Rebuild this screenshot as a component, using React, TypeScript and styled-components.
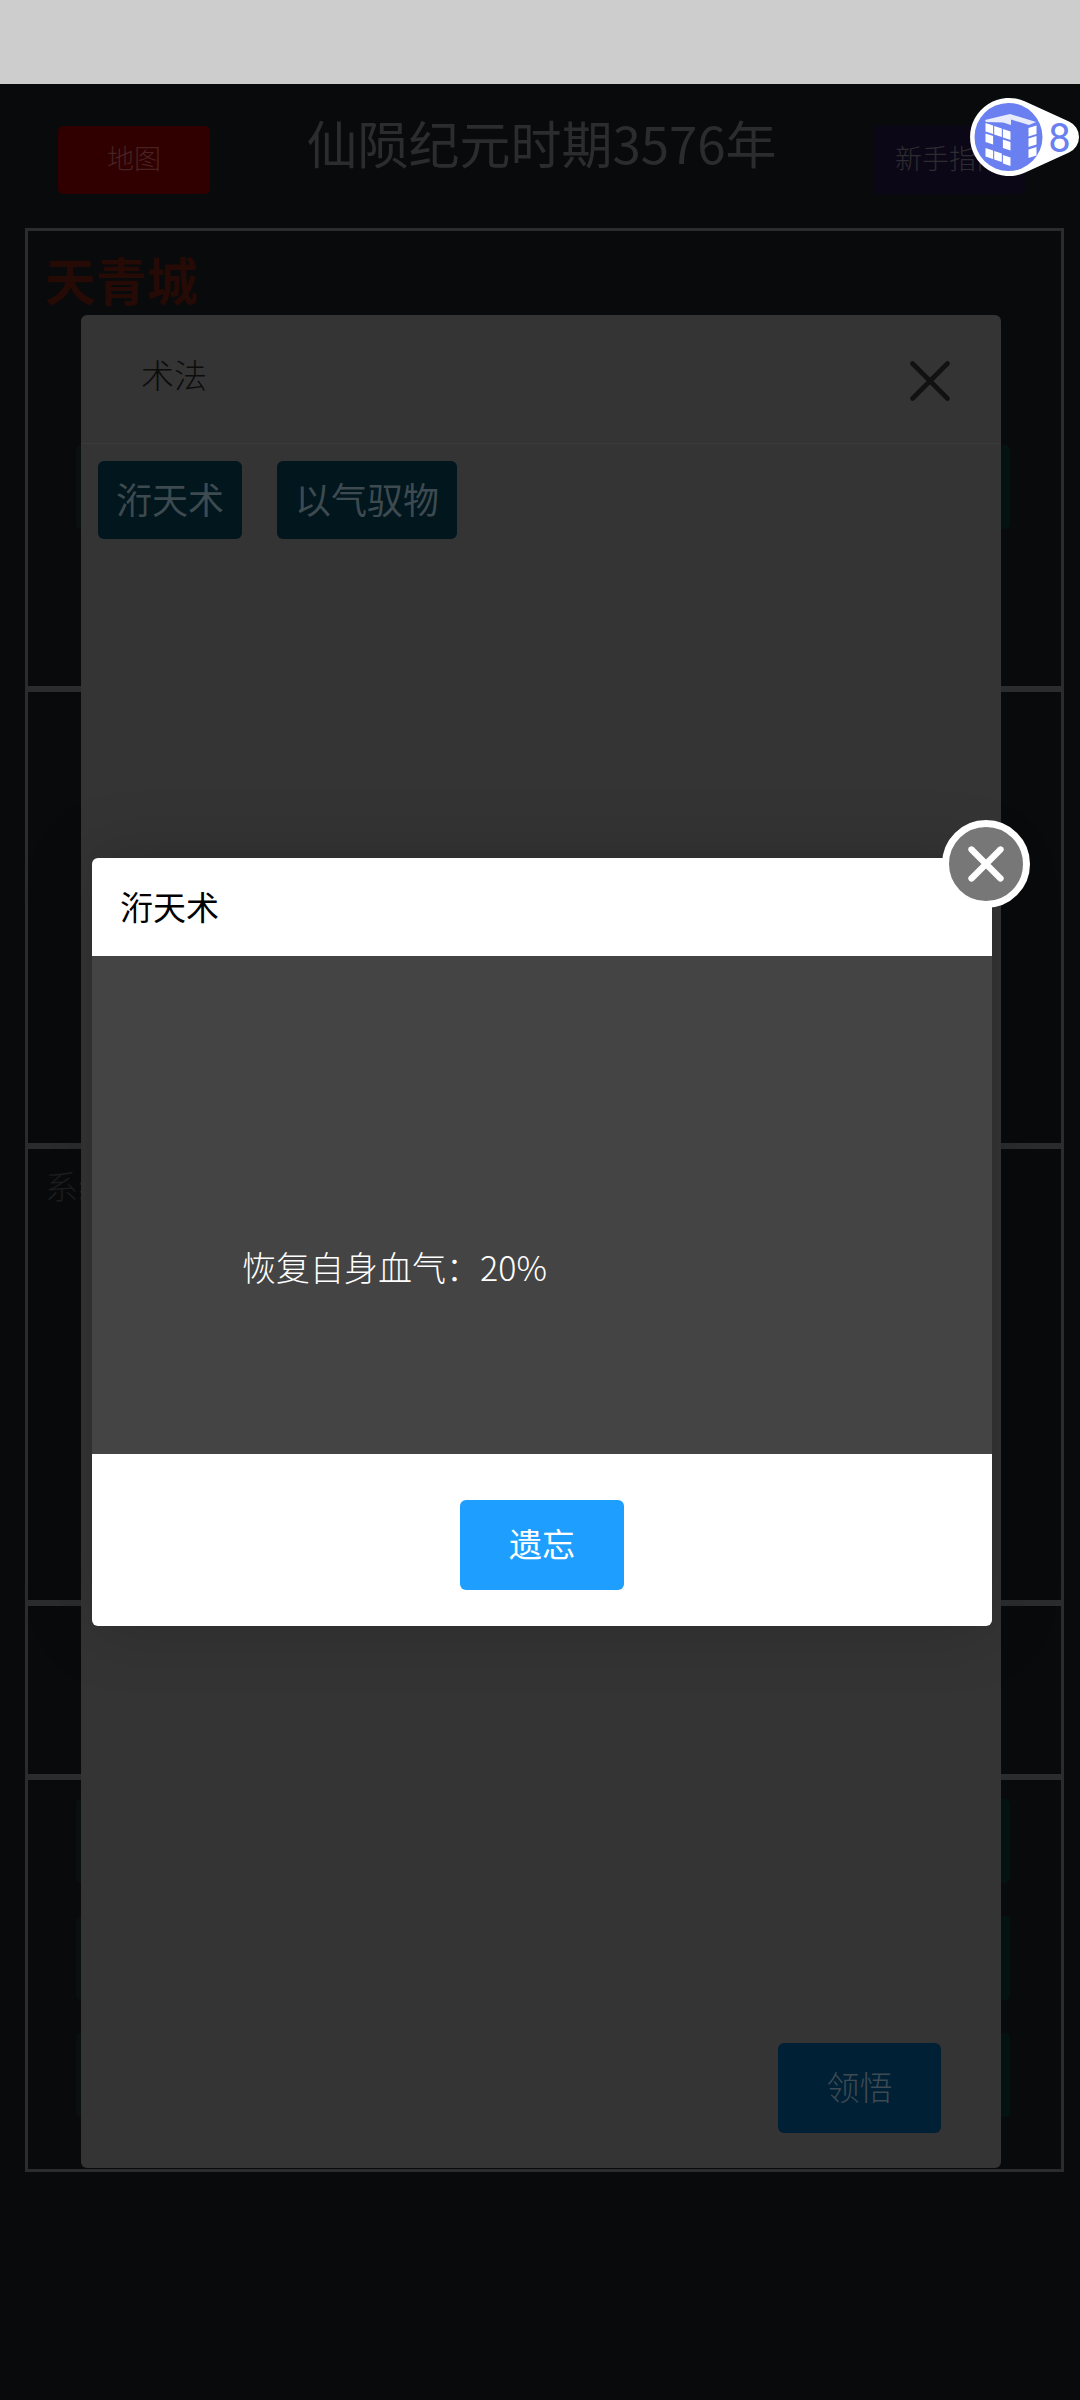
import React from "react";
import styled, { createGlobalStyle } from "styled-components";
import { X } from "lucide-react";

const GlobalStyle = createGlobalStyle`
  html, body {
    margin: 0;
    padding: 0;
    background: #090a0b;
    font-family: "Noto Sans CJK SC", Roboto, sans-serif;
  }
  * {
    box-sizing: border-box;
  }
`;

const leftFaceTiles = [
  [0, 0], [0, 1.05], [1, 0], [2, 0], [2, 1.05], [0, 2.5], [1, 2.5], [2, 2.6],
];
const rightFaceTiles = [0, 1.05, 2.15];

const Logo = () => (
  <LogoSvg viewBox="0 0 115 90">
    <path
      d="M60.2 9.5 L104 29.5 A17 17 0 0 1 104 60.5 L60.2 80.5 A39 39 0 1 1 60.2 9.5 Z"
      fill="#ffffff"
    />
    <circle cx="43.5" cy="45" r="34" fill="#6a80f0" />
    <polygon points="20,28 45,22 71,30 64,33 46,27.5 46,33 38,30.5 21,30" fill="#e8ebfb" />
    {leftFaceTiles.map(([col, row]) => {
      const x = 20.5 + col * 8.7;
      const y = 31 + col * 3 + row * 10;
      return (
        <polygon
          key={`${col}-${row}`}
          points={`${x},${y} ${x + 7.6},${y + 2.4} ${x + 7.6},${y + 11} ${x},${y + 8.6}`}
          fill="#ffffff"
        />
      );
    })}
    {rightFaceTiles.map((row) => {
      const y = 36 + row * 10;
      return (
        <polygon
          key={row}
          points={`63.5,${y} 71.5,${y - 2.6} 71.5,${y + 6} 63.5,${y + 8.6}`}
          fill="#ffffff"
        />
      );
    })}
    <LogoDigit x="94.5" y="60">8</LogoDigit>
  </LogoSvg>
);

export default function App() {
  return (
    <Page>
      <GlobalStyle />
      <StatusBar />
      <TopBar>
        <TopButton $bg="#300000" $color="#472323">地图</TopButton>
        <EraTitle>仙陨纪元时期3576年</EraTitle>
        <TopButton $bg="#0c0716" $color="#2d2c30">新手指南</TopButton>
      </TopBar>

      <Board>
        <Section $height={461}>
          <CityName>天青城</CityName>
          <StripRow>
            <Strip />
          </StripRow>
        </Section>
        <Section $height={457} />
        <Section $height={457}>
          <SystemLabel>系统</SystemLabel>
        </Section>
        <Section $height={174} />
        <Section $height={395}>
          <StripColumn>
            <Strip />
            <Strip />
            <Strip />
          </StripColumn>
        </Section>
      </Board>

      <SkillPanel>
        <PanelHeader>
          <PanelTitle>术法</PanelTitle>
          <PanelClose>
            <X size={70} strokeWidth={1.6} />
          </PanelClose>
        </PanelHeader>
        <TabRow>
          <SkillTab>洐天术</SkillTab>
          <SkillTab>以气驭物</SkillTab>
        </TabRow>
        <PanelFooter>
          <LearnButton>领悟</LearnButton>
        </PanelFooter>
      </SkillPanel>

      <Dialog>
        <DialogClose>
          <X size={58} strokeWidth={2.6} />
        </DialogClose>
        <DialogHeader>洐天术</DialogHeader>
        <DialogBody>恢复自身血气：20%</DialogBody>
        <DialogFooter>
          <ForgetButton>遗忘</ForgetButton>
        </DialogFooter>
      </Dialog>

      <Logo />
    </Page>
  );
}

const Page = styled.div`
  position: relative;
  width: 1080px;
  height: 2400px;
  overflow: hidden;
  background: #090a0b;
`;

const StatusBar = styled.div`
  height: 84px;
  background: #cdcdcd;
`;

const TopBar = styled.header`
  display: flex;
  justify-content: space-between;
  align-items: flex-start;
  height: 144px;
  padding: 42px 55px 0 58px;
`;

const TopButton = styled.div<{ $bg: string; $color: string }>`
  display: flex;
  align-items: center;
  justify-content: center;
  width: 152px;
  height: 68px;
  padding-bottom: 5px;
  border-radius: 5px;
  background: ${(p) => p.$bg};
  color: ${(p) => p.$color};
  font-size: 27px;
  font-weight: 300;
`;

const EraTitle = styled.h1`
  margin: -14px 0 0;
  font-size: 51px;
  line-height: 60px;
  font-weight: 400;
  color: #2b2c2d;
`;

const Board = styled.main`
  margin: 0 16px 0 25px;
  display: flex;
  flex-direction: column;
`;

const Section = styled.section<{ $height: number }>`
  height: ${(p) => p.$height}px;
  border: 3px solid #2a2c2e;
  padding: 0 51px 0 48px;
`;

const CityName = styled.h2`
  margin: 15px 0 0 -31px;
  font-size: 51px;
  line-height: 66px;
  font-weight: 700;
  color: #260a06;
`;

const SystemLabel = styled.div`
  margin: 14px 0 0 -31px;
  font-size: 33px;
  line-height: 44px;
  font-weight: 300;
  color: #1d1d1d;
`;

const StripRow = styled.div`
  margin-top: 133px;
  display: flex;
  justify-content: flex-end;
`;

const StripColumn = styled.div`
  padding-top: 19px;
  display: flex;
  flex-direction: column;
  gap: 33px;
`;

const Strip = styled.div`
  width: 100%;
  height: 84px;
  border-radius: 5px;
  background: linear-gradient(to right, #0a0f0f 0, #021311 100%);
`;

const SkillPanel = styled.div`
  position: absolute;
  top: 315px;
  left: 81px;
  width: 920px;
  height: 1853px;
  display: flex;
  flex-direction: column;
  border-radius: 6px;
  background: #343434;
`;

const PanelHeader = styled.div`
  display: flex;
  justify-content: space-between;
  align-items: flex-start;
  height: 129px;
  padding: 31px 36px 0 60px;
  border-bottom: 1px solid #3a3a3a;
`;

const PanelTitle = styled.div`
  margin-top: 4px;
  font-size: 33px;
  line-height: 48px;
  font-weight: 300;
  color: #0c0c0c;
`;

const PanelClose = styled.div`
  display: flex;
  color: #111111;
`;

const TabRow = styled.div`
  display: flex;
  gap: 35px;
  padding: 17px 0 0 17px;
`;

const SkillTab = styled.div`
  display: flex;
  align-items: center;
  height: 78px;
  padding: 0 18px 5px;
  border-radius: 6px;
  background: #02161e;
  color: #3d4a4f;
  font-size: 36px;
  font-weight: 400;
`;

const PanelFooter = styled.div`
  margin-top: auto;
  display: flex;
  justify-content: flex-end;
  padding: 0 60px 35px 0;
`;

const LearnButton = styled.div`
  display: flex;
  align-items: center;
  justify-content: center;
  width: 163px;
  height: 90px;
  padding-bottom: 5px;
  border-radius: 6px;
  background: #002035;
  color: #3d4a52;
  font-size: 33px;
  font-weight: 300;
`;

const Dialog = styled.div`
  position: absolute;
  top: 858px;
  left: 92px;
  width: 900px;
  height: 768px;
  display: flex;
  flex-direction: column;
  border-radius: 6px;
  box-shadow: 0 0 70px rgba(0, 0, 0, 0.18);
`;

const DialogClose = styled.div`
  position: absolute;
  top: -38px;
  right: -38px;
  display: flex;
  align-items: center;
  justify-content: center;
  width: 88px;
  height: 88px;
  border: 7px solid #ffffff;
  border-radius: 50%;
  background: #777777;
  color: #ffffff;
`;

const DialogHeader = styled.div`
  display: flex;
  align-items: center;
  height: 98px;
  padding: 0 0 3px 28px;
  border-radius: 6px 6px 0 0;
  background: #ffffff;
  color: #000000;
  font-size: 33px;
  font-weight: 400;
`;

const DialogBody = styled.div`
  height: 498px;
  padding: 287px 0 0 150px;
  background: #444444;
  color: #ffffff;
  font-size: 34px;
  line-height: 48px;
  font-weight: 300;
`;

const DialogFooter = styled.div`
  flex: 1;
  display: flex;
  justify-content: center;
  padding-top: 46px;
  border-radius: 0 0 6px 6px;
  background: #ffffff;
`;

const ForgetButton = styled.div`
  display: flex;
  align-items: center;
  justify-content: center;
  width: 164px;
  height: 90px;
  padding-bottom: 5px;
  border-radius: 6px;
  background: #1e9fff;
  color: #ffffff;
  font-size: 33px;
  font-weight: 400;
`;

const LogoSvg = styled.svg`
  position: absolute;
  top: 92px;
  left: 965px;
  width: 115px;
  height: 90px;
`;

const LogoDigit = styled.text`
  font-family: Roboto, sans-serif;
  font-size: 40px;
  font-weight: 400;
  text-anchor: middle;
  fill: #6a80f0;
`;
